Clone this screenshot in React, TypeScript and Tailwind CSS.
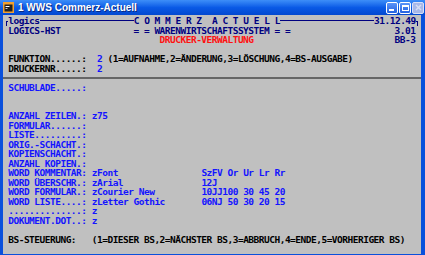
import React from "react";

type Seg = [number, string, string];

const navy = "text-[#000080]";
const red = "text-[#ff1010]";
const blue = "text-[#1414ff]";
const black = "text-black";

// rows of the 80x25 console, each segment starts at a column
const rows: (Seg[] | "top" | "rule")[] = [
  "top",
  [[1, "LOGICS-HST", navy], [25, "= = WARENWIRTSCHAFTSSYSTEM = =", navy], [75, "3.01", navy]],
  [[30, "DRUCKER-VERWALTUNG", red], [75, "BB-3", navy]],
  [],
  [[1, "FUNKTION......:", black], [18, "2", blue], [20, "(1=AUFNAHME,2=ÄNDERUNG,3=LÖSCHUNG,4=BS-AUSGABE)", black]],
  [[1, "DRUCKERNR.....:", black], [18, "2", blue]],
  "rule",
  [[1, "SCHUBLADE.....:", blue]],
  [],
  [],
  [[1, "ANZAHL ZEILEN.:", blue], [17, "z75", blue]],
  [[1, "FORMULAR......:", blue]],
  [[1, "LISTE.........:", blue]],
  [[1, "ORIG.-SCHACHT.:", blue]],
  [[1, "KOPIENSCHACHT.:", blue]],
  [[1, "ANZAHL KOPIEN.:", blue]],
  [[1, "WORD KOMMENTAR:", blue], [17, "zFont", blue], [38, "SzFV Or Ur Lr Rr", blue]],
  [[1, "WORD ÜBERSCHR.:", blue], [17, "zArial", blue], [38, "12J", blue]],
  [[1, "WORD FORMULAR.:", blue], [17, "zCourier New", blue], [38, "10JJ100 30 45 20", blue]],
  [[1, "WORD LISTE....:", blue], [17, "zLetter Gothic", blue], [38, "06NJ 50 30 20 15", blue]],
  [[1, "..............:", blue], [17, "z", blue]],
  [[1, "DOKUMENT.DOT..:", blue], [17, "z", blue]],
  [],
  [[1, "BS-STEUERUNG:", black], [17, "(1=DIESER BS,2=NÄCHSTER BS,3=ABBRUCH,4=ENDE,5=VORHERIGER BS)", black]],
  [],
];

const Line = ({ segs }: { segs: Seg[] }) => {
  let col = 0;
  return (
    <div className="h-[9.5px] whitespace-pre">
      {segs.map(([at, text, color], i) => {
        const pad = " ".repeat(Math.max(0, at - col));
        col = at + text.length;
        return (
          <React.Fragment key={i}>
            {pad}
            <span className={color}>{text}</span>
          </React.Fragment>
        );
      })}
    </div>
  );
};

const TopRow = () => (
  <div className="flex h-[9.5px] items-center whitespace-pre text-[#000080]">
    <div className="w-[2.6px]" />
    <div className="w-[2.6px] h-[4.75px] self-end border-l border-t border-[#000080]" />
    <span>logics</span>
    <div className="flex-1 h-px bg-[#000080]" />
    <span>C O M M E R Z  A C T U E L L</span>
    <div className="flex-1 h-px bg-[#000080]" />
    <span>31.12.49</span>
    <div className="w-[2.6px] h-[4.75px] self-end border-r border-t border-[#000080]" />
    <div className="w-[2.6px]" />
  </div>
);

const Rule = () => (
  <div className="h-[9.5px] flex items-center">
    <div className="w-full h-[2px] bg-[#666666]" />
  </div>
);

export default function App() {
  return (
    <div className="w-[425px] h-[255px] overflow-hidden flex flex-col bg-[#0a50dc]">
      {/* title bar */}
      <div className="h-[15px] flex items-center bg-gradient-to-b from-[#3d8ef8] via-[#0a5ae6] to-[#0348d0]">
        <svg width="11" height="11" viewBox="0 0 11 11" className="ml-[3px]">
          <rect x="0" y="0" width="11" height="11" fill="#f0a030" />
          <rect x="1.5" y="2.5" width="8" height="7" fill="#202020" />
          <rect x="2.5" y="4" width="4" height="1" fill="#ffffff" />
          <rect x="2.5" y="6" width="2" height="1" fill="#c0c0c0" />
        </svg>
        <span className="ml-[4px] text-white text-[10px] font-bold leading-none font-['Liberation_Sans',Arial,sans-serif] [text-shadow:1px_1px_0_#0a2a80]">
          1 WWS Commerz-Actuell
        </span>
        <div className="ml-auto mr-[1px] flex gap-[1px]">
          <div className="w-[12px] h-[12px] rounded-[2px] border border-white bg-gradient-to-b from-[#5b94f8] to-[#2462e0] flex items-end justify-start p-[2px]">
            <div className="w-[5px] h-[2px] bg-white" />
          </div>
          <div className="w-[12px] h-[12px] rounded-[2px] border border-white bg-gradient-to-b from-[#5b94f8] to-[#2462e0] flex items-center justify-center">
            <div className="w-[7px] h-[6px] border border-white border-t-2" />
          </div>
          <div className="w-[12px] h-[12px] rounded-[2px] border border-[#d8e0f8] bg-[#a7b8ea] flex items-center justify-center">
            <svg width="7" height="7" viewBox="0 0 7 7">
              <path d="M1 1L6 6M6 1L1 6" stroke="#d6def4" strokeWidth="1.5" />
            </svg>
          </div>
        </div>
      </div>
      {/* console */}
      <div className="flex-1 ml-[3px] mr-[4px] mb-[1px] pt-[1px] bg-[#c0c0c0] overflow-hidden font-['DejaVu_Sans_Mono',monospace] font-bold text-[9.5px] leading-[9.5px] tracking-[-0.5px]">
        {rows.map((r, i) =>
          r === "top" ? <TopRow key={i} /> : r === "rule" ? <Rule key={i} /> : <Line key={i} segs={r} />
        )}
      </div>
    </div>
  );
}
